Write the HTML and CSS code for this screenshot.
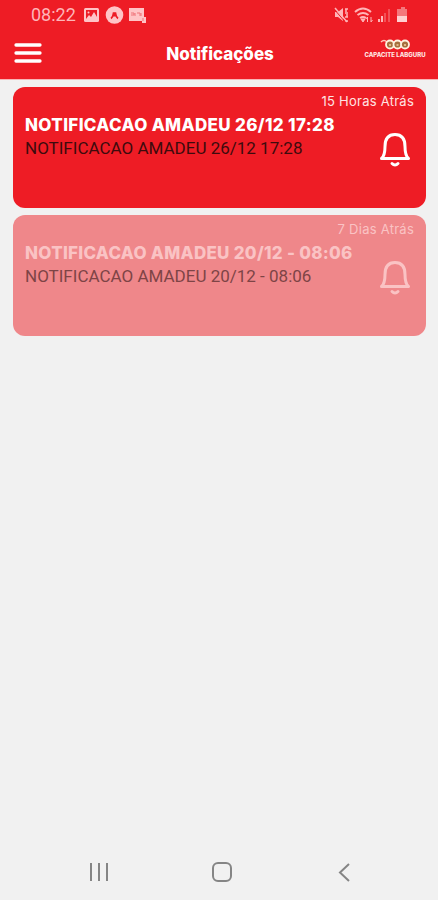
FILE: index.html
```
<!DOCTYPE html>
<html lang="pt">
<head>
    <meta charset="UTF-8">
    <title>Notificações</title>
    <link rel="stylesheet" href="styles.css">
</head>
<body>

<header>
    <div class="status">
        <span class="clock">08:22</span>
        <svg class="status-left" width="64" height="18" viewBox="0 0 64 18">
            <rect x="1" y="2" width="15" height="14" rx="1.5" fill="#ffc4c6"/>
            <path d="M3 4h11v10H3z" fill="#ee1c25"/>
            <path d="M3 13l3-4 2 2 3-5 3 5v3H3z" fill="#ffc4c6"/>
            <circle cx="5.500" cy="6.500" r="1" fill="#ffc4c6"/>
            <circle cx="31.500" cy="9" r="8.800" fill="#ffc4c6"/>
            <path d="M28 12.500q2-1.500 2.500-5.500h2q.5 4 2.500 5.500M30.500 10l1-2 1 2" fill="none" stroke="#ee1c25" stroke-width="1.700"/>
            <path d="M46 2h15v9h2v6h-4v-2H46z" fill="#ffc4c6"/>
            <path d="M48 7h3v2h-3M52 7v3M54 7h3v3M58 7v3M60 12v3" fill="none" stroke="#ef7379" stroke-width="1"/>
        </svg>
        <svg class="status-right" width="78" height="18" viewBox="0 0 78 18">
            <path d="M3 6h3l5-4v13l-5-4H3z" fill="#ffb5b8"/>
            <path d="M13 3h3M13 7h3M13 11h3M13 15h3M14 3v3M15 8v3" fill="none" stroke="#ffb5b8" stroke-width="1.500"/>
            <path d="M3 2l12 14" stroke="#ffb5b8" stroke-width="1.500"/>
            <path d="M2 3l12 14" stroke="#ee1c25"/>
            <path d="M23 6q8-7 16 0M25.500 9q5.500-4 11 0M28 12q3-2 6 0" fill="none" stroke="#ffb5b8" stroke-width="1.900"/>
            <path d="M29 13h4l-2 3zM35.500 16v-5m-1.500 2l1.500-2M39 11v5m1.500-2L39 16" fill="#ffb5b8" stroke="#ffb5b8"/>
            <path d="M46 13h2v3h-2zM49 10h2v6h-2z" fill="#ffb5b8"/>
            <path d="M52 7h2v9h-2zM56 3h2v13h-2z" fill="#f35157"/>
            <path d="M67 3h2V1h4v2h2v7H65V3z" fill="#f4777c"/>
            <path d="M65 10h10v6H65z" fill="#ffd0d1"/>
        </svg>
    </div>
    <div class="bar">
        <svg class="menu" width="28" height="22" viewBox="0 0 28 22">
            <path d="M2 3h24M2 11h24M2 19h24" stroke="#fff" stroke-width="3.300" stroke-linecap="round"/>
        </svg>
        <h1>Notificações</h1>
        <div class="logo">
            <svg width="30" height="12" viewBox="0 0 30 12">
                <path d="M1 3q3-3 6 0" fill="none" stroke="#ffc4b8" stroke-width="1.500"/>
                <g fill="#a5703f" stroke="#fff2e0" stroke-width="1.800">
                    <circle cx="10" cy="5.500" r="4"/>
                    <circle cx="17.500" cy="5.500" r="4"/>
                    <circle cx="25" cy="5.500" r="4"/>
                </g>
                <path d="M9 6h2M16.500 6h2M24 6h2" stroke="#f5cda0" stroke-width="1.500"/>
            </svg>
            <span>CAPACITE LABGURU</span>
        </div>
    </div>
</header>

<main>
    <article class="card">
        <time>15 Horas Atrás</time>
        <h2>NOTIFICACAO AMADEU 26/12 17:28</h2>
        <p>NOTIFICACAO AMADEU 26/12 17:28</p>
        <svg class="bell" width="32" height="36" viewBox="0 0 32 36">
            <path d="M2.500 26.500C5.500 24 6 20 6 14.500C6 7 9 2.500 16 2.500S26 7 26 14.500C26 20 26.500 24 29.500 26.500Z"/>
            <path d="M13 31.500q3 3 6 0"/>
        </svg>
    </article>
    <article class="card read">
        <time>7 Dias Atrás</time>
        <h2>NOTIFICACAO AMADEU 20/12 - 08:06</h2>
        <p>NOTIFICACAO AMADEU 20/12 - 08:06</p>
        <svg class="bell" width="32" height="36" viewBox="0 0 32 36">
            <path d="M2.500 26.500C5.500 24 6 20 6 14.500C6 7 9 2.500 16 2.500S26 7 26 14.500C26 20 26.500 24 29.500 26.500Z"/>
            <path d="M13 31.500q3 3 6 0"/>
        </svg>
    </article>
</main>

<nav>
    <svg width="22" height="22" viewBox="0 0 22 22">
        <path d="M3 2v18M11 2v18M19 2v18"/>
    </svg>
    <svg width="22" height="22" viewBox="0 0 22 22">
        <rect x="2" y="2" width="18" height="18" rx="5"/>
    </svg>
    <svg width="22" height="22" viewBox="0 0 22 22">
        <path d="M16 3L7 11.500L16 20"/>
    </svg>
</nav>

</body>
</html>
```
FILE: styles.css
```
* {
    box-sizing: border-box;
}
body {
    margin: 0;
    height: 900px;
    display: flex;
    flex-direction: column;
    background: #f1f1f1;
    font-family: Inter, "Liberation Sans", sans-serif;
}
h1, h2, p {
    margin: 0;
    white-space: nowrap;
}
svg {
    display: block;
    flex: none;
}
header {
    height: 80px;
    background: #ee1c25;
    border-bottom: 1px solid #f9b5b6;
}
.status {
    height: 30px;
    padding: 0 28px 0 31px;
    display: flex;
    align-items: center;
}
.clock {
    width: 52px;
    font: 18px/30px Roboto, sans-serif;
    color: #ffb5b8;
}
.status-right {
    margin-left: auto;
}
.bar {
    height: 48px;
    padding: 0 12px 0 14px;
    display: grid;
    grid-template-columns: 62px 1fr 62px;
    align-items: center;
}
.menu {
    margin-bottom: 2px;
}
h1 {
    color: #fff;
    font-size: 17px;
    font-weight: 800;
    text-align: center;
}
.logo {
    display: flex;
    flex-direction: column;
    align-items: center;
    height: 30px;
}
.logo span {
    font-size: 6px;
    line-height: 7px;
    font-weight: 800;
    color: #ffe5e2;
    white-space: nowrap;
}
main {
    flex: 1;
    padding: 7px 12px 0 13px;
}
.card {
    position: relative;
    height: 121px;
    margin-bottom: 7px;
    padding: 5px 12px;
    border-radius: 12px;
    background: #ee1c25;
}
time {
    display: block;
    font-size: 13px;
    line-height: 18px;
    letter-spacing: 0.25px;
    text-align: right;
    color: #ffe3e3;
}
h2 {
    margin-top: 4px;
    font-size: 17px;
    line-height: 22px;
    font-weight: 800;
    letter-spacing: 0.35px;
    color: #fff;
}
p {
    font: 17px/24px Roboto, sans-serif;
    color: #3d0b0d;
}
.bell {
    position: absolute;
    right: 15px;
    top: 45px;
    fill: none;
    stroke: #fff;
    stroke-width: 3;
    stroke-linejoin: round;
    stroke-linecap: round;
}
.read {
    background: #ef878a;
}
.read time, .read h2 {
    color: #fac3c4;
}
.read h2 {
    letter-spacing: 0.28px;
}
.read p {
    color: #7e4446;
}
.read .bell {
    stroke: #fac3c4;
}
nav {
    height: 56px;
    padding: 0 83px 0 88px;
    display: flex;
    justify-content: space-between;
    align-items: center;
}
nav svg {
    fill: none;
    stroke: #858585;
    stroke-width: 2;
}
```
